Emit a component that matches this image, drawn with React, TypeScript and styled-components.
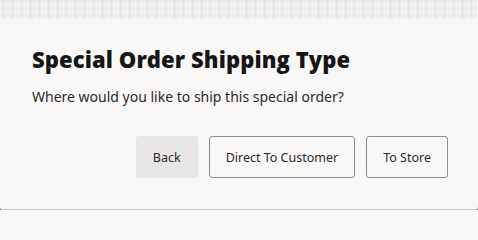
import React from "react";
import styled, { createGlobalStyle } from "styled-components";

const Global = createGlobalStyle`
  html, body { margin: 0; padding: 0; background: #f9f8f6; }
  body { width: 478px; height: 210px; overflow: hidden; }
  #root { width: 478px; height: 210px; }
`;

const Frame = styled.div`
  width: 478px;
  height: 210px;
  display: flex;
  flex-direction: column;
  background: #7d7d7d;
`;

const Backdrop = styled.div`
  height: 19px;
  flex: none;
  background-color: #eeeeed;
  background-image:
    repeating-linear-gradient(90deg, rgba(255,255,255,0.5) 0 1px, rgba(0,0,0,0) 1px 3px, rgba(0,0,0,0.035) 3px 4px, rgba(0,0,0,0) 4px 6px, rgba(255,255,255,0.4) 6px 7px, rgba(0,0,0,0) 7px 9px),
    repeating-linear-gradient(0deg, rgba(255,255,255,0.25) 0 2px, rgba(0,0,0,0.02) 2px 5px, rgba(0,0,0,0) 5px 7px);
`;

const Dialog = styled.div`
  flex: 1;
  display: flex;
  flex-direction: column;
  background: #f9f8f6;
  border-bottom: 1px solid #c9c9c7;
  border-radius: 0 0 3px 3px;
  padding: 25px 30px 0 32px;
  font-family: "Noto Sans", "Open Sans", sans-serif;
`;

const Title = styled.h1`
  margin: 0;
  font-family: "Open Sans", "Noto Sans", sans-serif;
  font-weight: 800;
  font-size: 22px;
  line-height: 30px;
  color: #161616;
  letter-spacing: 0.1px;
`;

const Message = styled.p`
  margin: 13px 0 0;
  font-size: 14px;
  line-height: 20px;
  color: #2a2a2a;
`;

const Actions = styled.div`
  display: flex;
  justify-content: flex-end;
  gap: 11px;
  margin-top: 29px;
`;

const Button = styled.button<{ $variant?: "ghost" | "outline" }>`
  height: 42px;
  padding: 0 16px;
  font-family: "Noto Sans", "Open Sans", sans-serif;
  font-size: 12.5px;
  color: #2b2b2b;
  border-radius: 3px;
  cursor: pointer;
  background: ${(p) => (p.$variant === "ghost" ? "#e8e7e5" : "transparent")};
  border: 1px solid ${(p) => (p.$variant === "ghost" ? "#e8e7e5" : "#8f8f8f")};
`;

export default function App() {
  return (
    <>
      <Global />
      <Frame>
        <Backdrop />
        <Dialog>
          <Title>Special Order Shipping Type</Title>
          <Message>Where would you like to ship this special order?</Message>
          <Actions>
            <Button $variant="ghost">Back</Button>
            <Button $variant="outline">Direct To Customer</Button>
            <Button $variant="outline">To Store</Button>
          </Actions>
        </Dialog>
      </Frame>
    </>
  );
}
